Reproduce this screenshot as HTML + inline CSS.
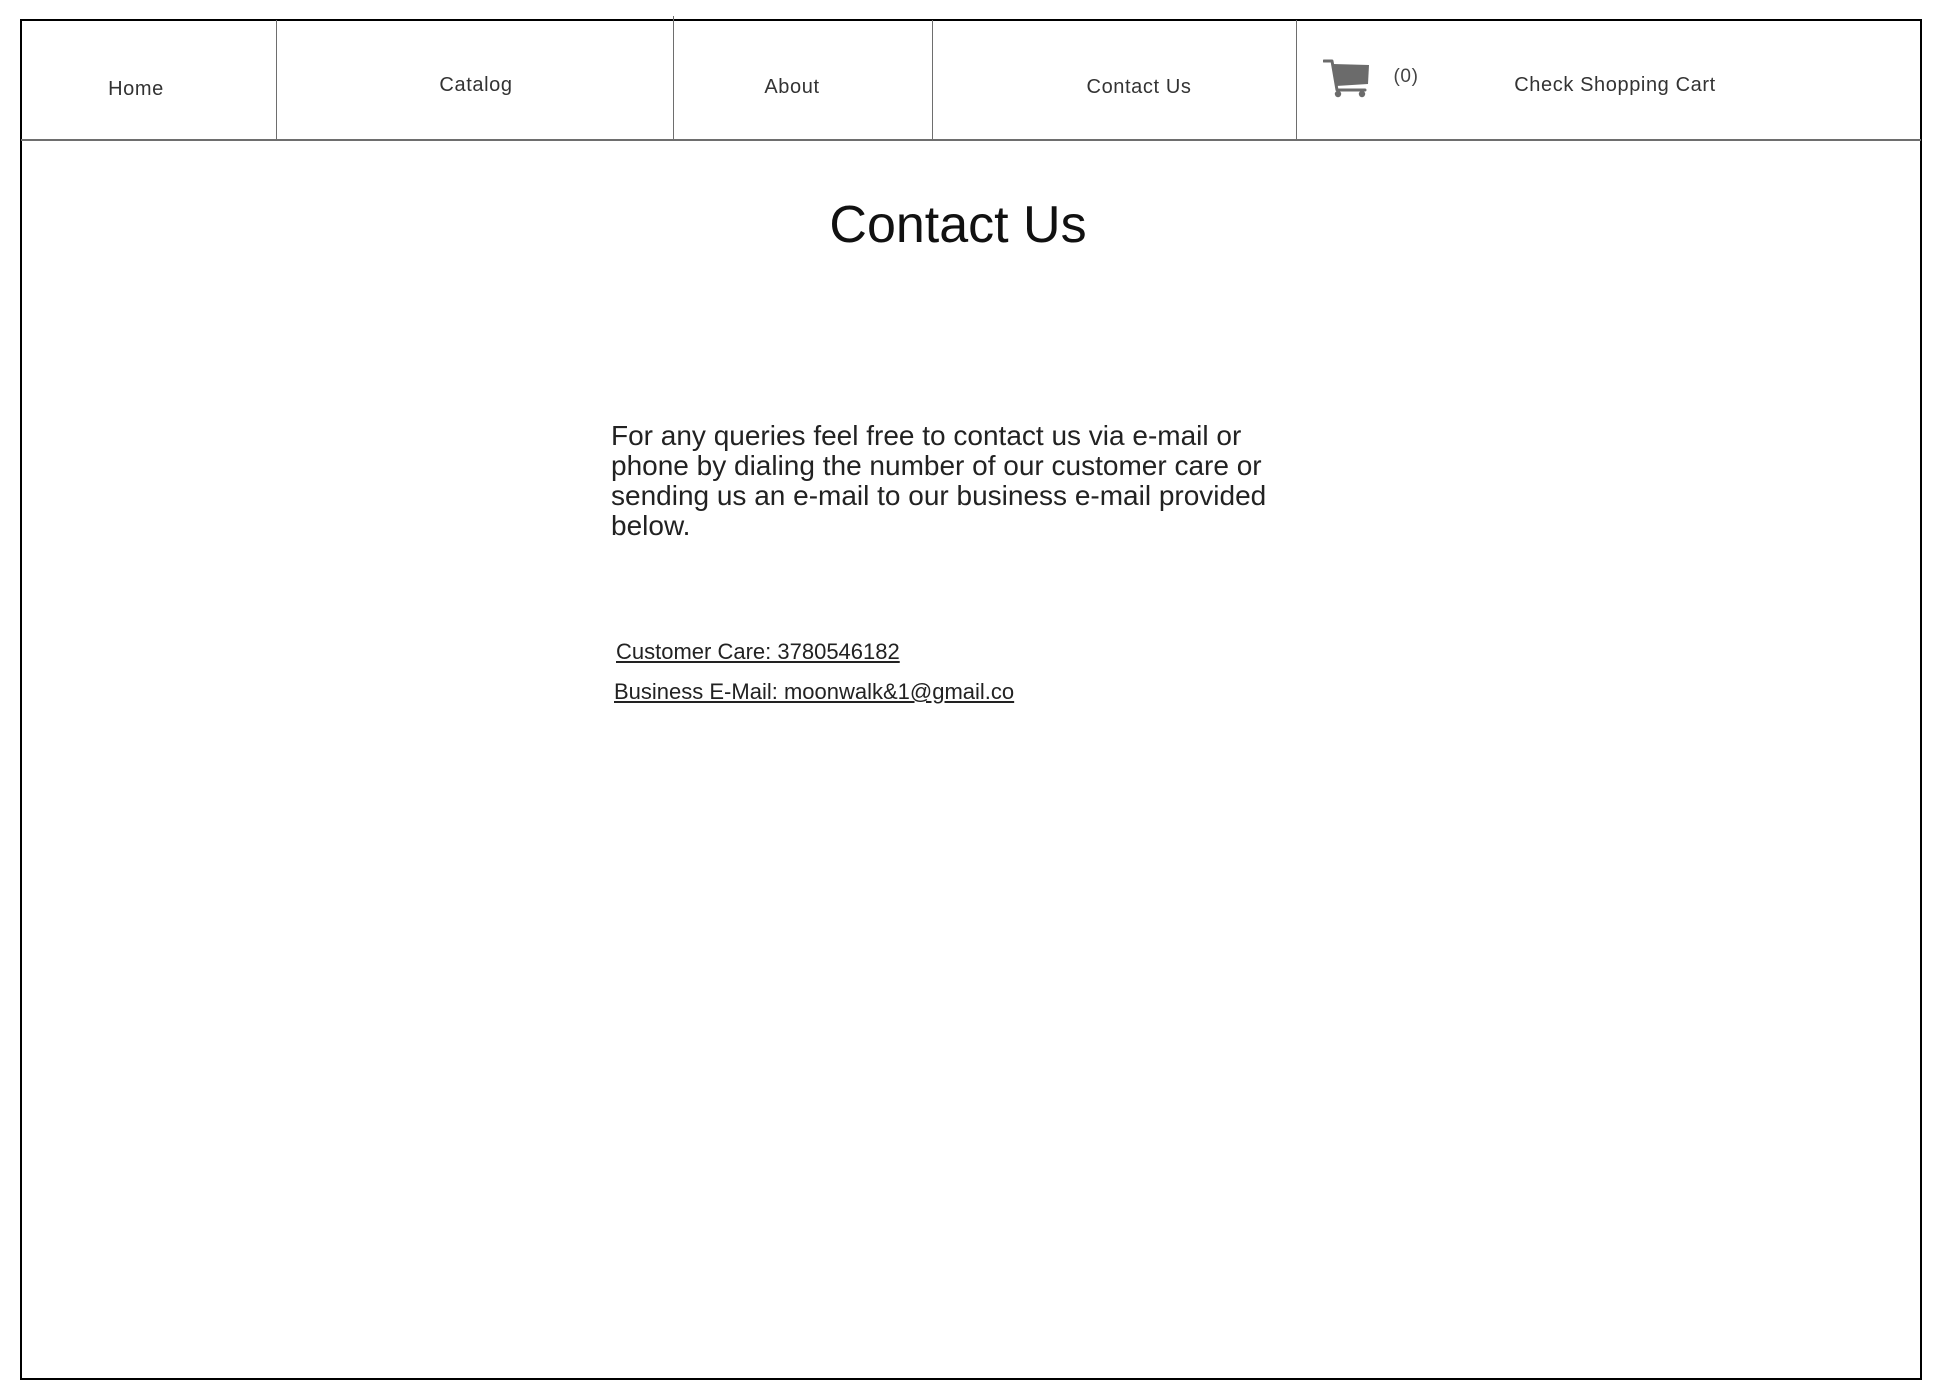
<!DOCTYPE html>
<html><head><meta charset="utf-8"><style>
*{margin:0;padding:0;box-sizing:border-box}
body{width:1948px;height:1396px;background:#fff;position:relative;overflow:hidden;font-family:"Liberation Sans",sans-serif;color:#222}
.box{position:absolute;left:20px;top:19px;width:1902px;height:1361px;border:2px solid #000}
.hline{position:absolute;left:21px;top:139px;width:1900px;height:2px;background:#6e6e6e}
.v{position:absolute;top:20px;width:1px;height:120px;background:#6e6e6e}
.n{position:absolute;font-size:20px;color:#333;white-space:nowrap;transform:translateX(-50%);line-height:1;letter-spacing:0.6px}
.t{position:absolute;left:958px;top:199px;transform:translateX(-50%);font-size:52px;color:#111;white-space:nowrap;line-height:1}
.p{position:absolute;left:611px;top:421px;font-size:28px;line-height:30px;letter-spacing:0;white-space:nowrap;color:#222}
.l{position:absolute;font-size:22px;text-decoration:underline;white-space:nowrap;line-height:1;color:#222}
</style></head><body>
<div class="box"></div>
<div class="hline"></div>
<div class="v" style="left:276px"></div>
<div class="v" style="left:673px;top:16px;height:124px"></div>
<div class="v" style="left:932px"></div>
<div class="v" style="left:1296px"></div>
<div class="n" style="left:136px;top:79px">Home</div>
<div class="n" style="left:476px;top:75px">Catalog</div>
<div class="n" style="left:792px;top:77px">About</div>
<div class="n" style="left:1139px;top:77px">Contact Us</div>
<div class="n" style="left:1615px;top:75px">Check Shopping Cart</div>
<svg style="position:absolute;left:1323px;top:58px" width="48" height="40" viewBox="0 0 48 40">
<path d="M1 3 H9 L14 32 H42" fill="none" stroke="#6b6b6b" stroke-width="3" stroke-linecap="round" stroke-linejoin="round"/>
<path d="M10 6 L46 7 L45 26 L13 28 Z" fill="#6b6b6b"/>
<circle cx="15" cy="36" r="3.2" fill="#6b6b6b"/><circle cx="39" cy="36" r="3.2" fill="#6b6b6b"/>
</svg>
<div class="n" style="left:1406px;top:67px;font-size:19px;color:#444">(0)</div>
<div class="t">Contact Us</div>
<div class="p">For any queries feel free to contact us via e-mail or<br>phone by dialing the number of our customer care or<br>sending us an e-mail to our business e-mail provided<br>below.</div>
<div class="l" style="left:616px;top:641px">Customer Care: 3780546182</div>
<div class="l" style="left:614px;top:681px">Business E-Mail: moonwalk&amp;1@gmail.co</div>
</body></html>
